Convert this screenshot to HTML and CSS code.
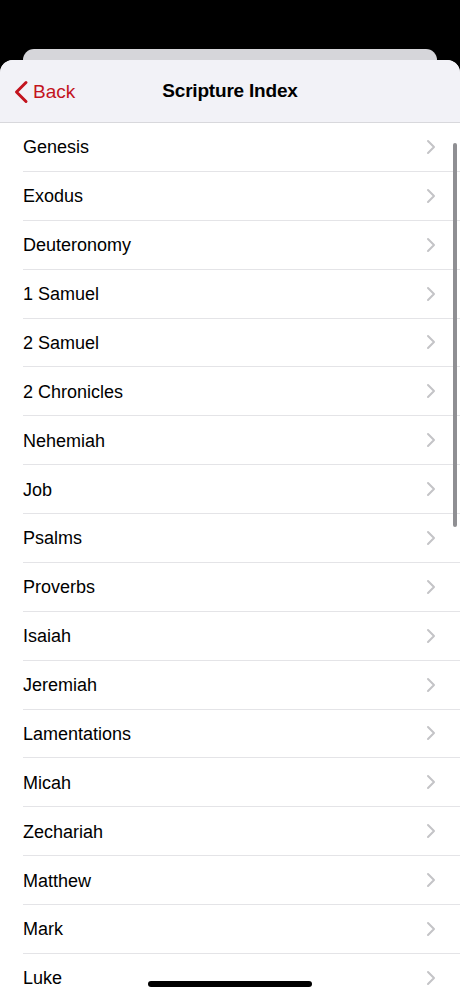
FILE: index.html
```html
<!DOCTYPE html>
<html>
<head>
<meta charset="utf-8">
<link rel="stylesheet" href="styles.css">
</head>
<body>
<div class="screen">
  <div class="back-card"></div>
  <div class="sheet">
    <header class="nav">
      <a class="back">
        <svg class="back-icon" width="16" height="24" viewBox="0 0 16 24"><path d="M13 2.5 L3.5 12 L13 21.5" fill="none" stroke="#c3141e" stroke-width="3" stroke-linecap="round" stroke-linejoin="round"/></svg>
        <span>Back</span>
      </a>
      <h1 class="title">Scripture Index</h1>
    </header>
    <ul class="list">
      <li class="row"><span>Genesis</span><svg class="chev" width="10" height="16" viewBox="0 0 10 16"><path d="M2 2 L8 8 L2 14" fill="none" stroke="#c4c4c7" stroke-width="2" stroke-linecap="round" stroke-linejoin="round"/></svg></li>
      <li class="row"><span>Exodus</span><svg class="chev" width="10" height="16" viewBox="0 0 10 16"><path d="M2 2 L8 8 L2 14" fill="none" stroke="#c4c4c7" stroke-width="2" stroke-linecap="round" stroke-linejoin="round"/></svg></li>
      <li class="row"><span>Deuteronomy</span><svg class="chev" width="10" height="16" viewBox="0 0 10 16"><path d="M2 2 L8 8 L2 14" fill="none" stroke="#c4c4c7" stroke-width="2" stroke-linecap="round" stroke-linejoin="round"/></svg></li>
      <li class="row"><span>1 Samuel</span><svg class="chev" width="10" height="16" viewBox="0 0 10 16"><path d="M2 2 L8 8 L2 14" fill="none" stroke="#c4c4c7" stroke-width="2" stroke-linecap="round" stroke-linejoin="round"/></svg></li>
      <li class="row"><span>2 Samuel</span><svg class="chev" width="10" height="16" viewBox="0 0 10 16"><path d="M2 2 L8 8 L2 14" fill="none" stroke="#c4c4c7" stroke-width="2" stroke-linecap="round" stroke-linejoin="round"/></svg></li>
      <li class="row"><span>2 Chronicles</span><svg class="chev" width="10" height="16" viewBox="0 0 10 16"><path d="M2 2 L8 8 L2 14" fill="none" stroke="#c4c4c7" stroke-width="2" stroke-linecap="round" stroke-linejoin="round"/></svg></li>
      <li class="row"><span>Nehemiah</span><svg class="chev" width="10" height="16" viewBox="0 0 10 16"><path d="M2 2 L8 8 L2 14" fill="none" stroke="#c4c4c7" stroke-width="2" stroke-linecap="round" stroke-linejoin="round"/></svg></li>
      <li class="row"><span>Job</span><svg class="chev" width="10" height="16" viewBox="0 0 10 16"><path d="M2 2 L8 8 L2 14" fill="none" stroke="#c4c4c7" stroke-width="2" stroke-linecap="round" stroke-linejoin="round"/></svg></li>
      <li class="row"><span>Psalms</span><svg class="chev" width="10" height="16" viewBox="0 0 10 16"><path d="M2 2 L8 8 L2 14" fill="none" stroke="#c4c4c7" stroke-width="2" stroke-linecap="round" stroke-linejoin="round"/></svg></li>
      <li class="row"><span>Proverbs</span><svg class="chev" width="10" height="16" viewBox="0 0 10 16"><path d="M2 2 L8 8 L2 14" fill="none" stroke="#c4c4c7" stroke-width="2" stroke-linecap="round" stroke-linejoin="round"/></svg></li>
      <li class="row"><span>Isaiah</span><svg class="chev" width="10" height="16" viewBox="0 0 10 16"><path d="M2 2 L8 8 L2 14" fill="none" stroke="#c4c4c7" stroke-width="2" stroke-linecap="round" stroke-linejoin="round"/></svg></li>
      <li class="row"><span>Jeremiah</span><svg class="chev" width="10" height="16" viewBox="0 0 10 16"><path d="M2 2 L8 8 L2 14" fill="none" stroke="#c4c4c7" stroke-width="2" stroke-linecap="round" stroke-linejoin="round"/></svg></li>
      <li class="row"><span>Lamentations</span><svg class="chev" width="10" height="16" viewBox="0 0 10 16"><path d="M2 2 L8 8 L2 14" fill="none" stroke="#c4c4c7" stroke-width="2" stroke-linecap="round" stroke-linejoin="round"/></svg></li>
      <li class="row"><span>Micah</span><svg class="chev" width="10" height="16" viewBox="0 0 10 16"><path d="M2 2 L8 8 L2 14" fill="none" stroke="#c4c4c7" stroke-width="2" stroke-linecap="round" stroke-linejoin="round"/></svg></li>
      <li class="row"><span>Zechariah</span><svg class="chev" width="10" height="16" viewBox="0 0 10 16"><path d="M2 2 L8 8 L2 14" fill="none" stroke="#c4c4c7" stroke-width="2" stroke-linecap="round" stroke-linejoin="round"/></svg></li>
      <li class="row"><span>Matthew</span><svg class="chev" width="10" height="16" viewBox="0 0 10 16"><path d="M2 2 L8 8 L2 14" fill="none" stroke="#c4c4c7" stroke-width="2" stroke-linecap="round" stroke-linejoin="round"/></svg></li>
      <li class="row"><span>Mark</span><svg class="chev" width="10" height="16" viewBox="0 0 10 16"><path d="M2 2 L8 8 L2 14" fill="none" stroke="#c4c4c7" stroke-width="2" stroke-linecap="round" stroke-linejoin="round"/></svg></li>
      <li class="row"><span>Luke</span><svg class="chev" width="10" height="16" viewBox="0 0 10 16"><path d="M2 2 L8 8 L2 14" fill="none" stroke="#c4c4c7" stroke-width="2" stroke-linecap="round" stroke-linejoin="round"/></svg></li>
    </ul>
    <div class="scrollbar"></div>
  </div>
  <div class="home-indicator"></div>
</div>
</body>
</html>
```
FILE: styles.css
```css
* { box-sizing: border-box; }
html, body { margin: 0; padding: 0; background: #000; }
body { font-family: "Liberation Sans", Arial, sans-serif; }
.screen {
  width: 460px;
  height: 996px;
  overflow: hidden;
  position: relative;
  background: #000;
  padding-top: 49px;
}
.back-card {
  height: 30px;
  margin: 0 23px;
  background: #d6d6da;
  border-radius: 11px 11px 0 0;
}
.sheet {
  position: relative;
  margin-top: -19px;
  height: 1000px;
  background: #fff;
  border-radius: 13px 13px 0 0;
  overflow: hidden;
}
.nav {
  height: 63px;
  background: #f2f2f7;
  border-bottom: 1px solid #d8d8dc;
  display: flex;
  align-items: center;
  justify-content: center;
  position: relative;
}
.back {
  position: absolute;
  left: 13px;
  top: 20px;
  display: flex;
  align-items: center;
  gap: 4px;
  color: #c3141e;
  font-size: 19px;
}
.back-icon { display: block; }
.title {
  margin: 0;
  font-size: 19px;
  font-weight: bold;
  color: #000;
  letter-spacing: -0.2px;
}
.list {
  list-style: none;
  margin: 0;
  padding: 0 0 0 23px;
}
.row {
  height: 48.875px;
  border-bottom: 1px solid #e4e4e7;
  display: flex;
  align-items: center;
  justify-content: space-between;
  padding-right: 24px;
  padding-top: 2px;
  font-size: 18px;
  color: #000;
}
.chev { display: block; margin-top: -2px; }
.scrollbar {
  position: absolute;
  right: 3px;
  top: 83px;
  width: 4px;
  height: 384px;
  border-radius: 2px;
  background: #8f8f93;
}
.home-indicator {
  position: absolute;
  left: 148px;
  top: 981px;
  width: 164px;
  height: 6px;
  border-radius: 3px;
  background: #000;
}
```
